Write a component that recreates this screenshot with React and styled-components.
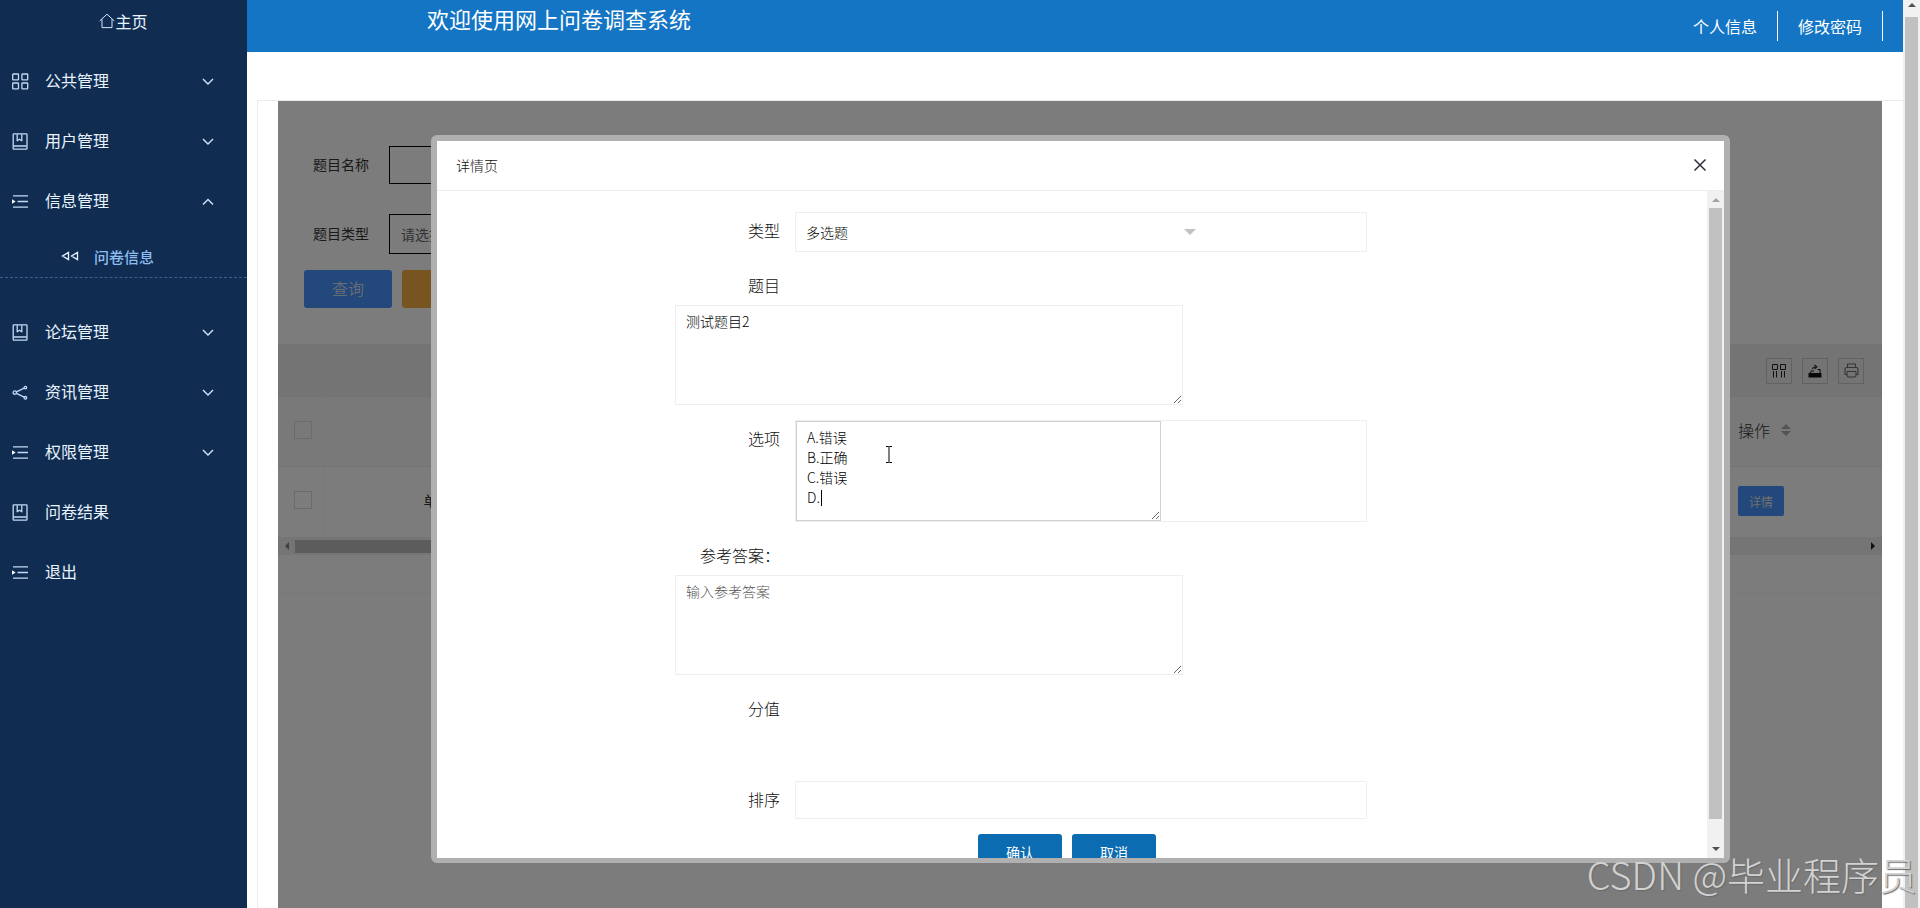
import styled, { createGlobalStyle } from "styled-components"
import { useState } from "react"

const GlobalStyle = createGlobalStyle`
    * {
        box-sizing: border-box;
    }
    body {
        margin: 0;
        font-family: "Noto Sans CJK SC", sans-serif;
        font-size: 14px;
        color: #333333;
        background-color: #ffffff;
    }
    input, select, textarea, button {
        font-family: inherit;
    }
`
const StylePage = styled.div`
    display: flex;
    height: 100vh;
    overflow: hidden;
    position: relative;
`
const StyleSidebar = styled.aside`
    flex: 0 0 247px;
    background-color: #102d51;
    color: #e9f3ff;
`
const StyleHome = styled.a`
    display: flex;
    justify-content: center;
    align-items: center;
    height: 42px;
    margin-bottom: 9px;
    font-size: 16px;
    color: inherit;
    text-decoration: none;
`
const StyleNavItem = styled.a`
    display: flex;
    align-items: center;
    height: 60px;
    padding: 0 31px 0 12px;
    gap: 16px;
    font-size: 16px;
    color: inherit;
    text-decoration: none;
`
const StyleNavText = styled.span`
    flex: 1;
    padding-bottom: 2px;
`
const StyleSubItem = styled.a`
    display: flex;
    align-items: center;
    height: 47px;
    margin-bottom: 24px;
    padding: 4px 0 0 61px;
    gap: 15px;
    font-size: 15px;
    font-weight: 500;
    color: #8fbdf2;
    text-decoration: none;
    border-bottom: 1px dashed #3d5f8a;
`
const StyleMain = styled.main`
    flex: 1;
    min-width: 0;
    display: flex;
    flex-direction: column;
`
const StyleTopBar = styled.header`
    display: flex;
    justify-content: space-between;
    align-items: center;
    height: 52px;
    padding: 0 20px 0 180px;
    background-color: #1475c4;
    color: #ffffff;
`
const StyleTitle = styled.h1`
    align-self: flex-start;
    margin: 0;
    font-size: 22px;
    line-height: 36px;
    font-weight: 400;
`
const StyleTopLink = styled.a`
    display: inline-block;
    padding: 0 20px;
    font-size: 16px;
    line-height: 30px;
    color: #ffffff;
    text-decoration: none;
    border-right: 1px solid #ffffff;
`
const StyleFrame = styled.div`
    flex: 1;
    display: flex;
    margin: 48px 0 0 10px;
    padding: 0 21px 0 20px;
    border-top: 1px solid #ececec;
    border-left: 1px solid #ececec;
`
const StylePanel = styled.section`
    flex: 1;
    min-width: 0;
    position: relative;
    background-color: #f8f8f8;
    border-radius: 2px 2px 0 0;
`
const StyleFilters = styled.form`
    display: flex;
    flex-direction: column;
    align-items: flex-start;
    padding: 45px 26px 36px;
`
const StyleFilterRow = styled.div`
    display: flex;
    align-items: center;
    gap: 20px;
    padding-left: 9px;
    margin-bottom: ${(props) => props.$space}px;
`
const StyleFilterLabel = styled.label`
    padding-bottom: 2px;
`
const StyleFilterInput = styled.input`
    width: 240px;
    height: 38px;
    padding: 0 11px;
    border: 1px solid #000000;
    background-color: transparent;
`
const StyleFilterSelect = styled.select`
    appearance: none;
    width: 240px;
    height: 40px;
    padding: 0 11px;
    border: 1px solid #000000;
    border-radius: 0;
    background-color: transparent;
    font-size: 14px;
    color: #666666;
`
const StyleFilterActions = styled.div`
    display: flex;
    gap: 10px;
`
const StyleFilterButton = styled.button`
    width: 88px;
    height: 38px;
    padding: 0 0 2px;
    border: none;
    border-radius: 3px;
    font-size: 16px;
    font-weight: 300;
    color: #e8e8e8;
    background-color: ${(props) => props.$color};
`
const StyleTools = styled.div`
    display: flex;
    justify-content: flex-end;
    align-items: center;
    gap: 10px;
    height: 53px;
    padding: 0 18px;
    background-color: #e9e9e9;
`
const StyleTool = styled.button`
    display: flex;
    justify-content: center;
    align-items: center;
    width: 26px;
    height: 26px;
    padding: 0;
    border: 1px solid #c4c4c4;
    background: none;
`
const StyleTable = styled.table`
    width: 100%;
    table-layout: fixed;
    border-collapse: collapse;
    th, td {
        padding: 0 8px 3px;
        font-weight: 400;
        text-align: left;
        border-bottom: 1px solid #ebebeb;
    }
    th {
        height: 69px;
        font-size: 16px;
        background-color: #f2f2f2;
    }
    td {
        height: 71px;
    }
    th:first-child, td:first-child {
        width: 46px;
        padding: 0 0 3px 16px;
        border-right: 1px solid #eeeeee;
    }
    th:last-child, td:last-child {
        width: 152px;
    }
`
const StyleCheck = styled.input`
    appearance: none;
    display: block;
    width: 18px;
    height: 18px;
    margin: 0;
    border: 1px solid #d6d6d6;
`
const StyleCell = styled.span`
    padding-left: 91px;
`
const StyleHeadCell = styled.span`
    display: flex;
    align-items: center;
    gap: 11px;
    font-weight: 300;
`
const StyleDetailButton = styled.button`
    display: block;
    width: 46px;
    height: 30px;
    margin-top: 2px;
    padding: 0;
    border: none;
    border-radius: 2px;
    font-size: 12px;
    color: #dddddd;
    background-color: #4690f8;
`
const StyleScrollX = styled.div`
    display: flex;
    align-items: center;
    gap: 4px;
    height: 17px;
    padding: 0 5px;
    background-color: #ebebeb;
`
const StyleThumbX = styled.div`
    width: 70%;
    height: 13px;
    margin-right: auto;
    background-color: #b8b8b8;
`
const StylePager = styled.div`
    height: 38px;
    border-bottom: 1px solid #f2f2f2;
`
const StyleShade = styled.div`
    position: absolute;
    inset: 0;
    display: flex;
    padding: 34px 152px 45px 153px;
    background-color: rgba(0, 0, 0, 0.5);
`
const StyleModal = styled.div`
    flex: 1;
    min-width: 0;
    display: flex;
    flex-direction: column;
    border: 6px solid #b0b0b0;
    border-bottom-width: 5px;
    border-radius: 6px;
    background-color: #ffffff;
`
const StyleModalHeader = styled.div`
    display: flex;
    justify-content: space-between;
    align-items: center;
    height: 50px;
    padding: 0 16px 2px 19px;
    border-bottom: 1px solid #eeeeee;
`
const StyleModalTitle = styled.h2`
    margin: 0;
    font-size: 14px;
    font-weight: 300;
    color: #111111;
`
const StyleClose = styled.button`
    display: flex;
    padding: 0;
    border: none;
    background: none;
    cursor: pointer;
`
const StyleModalBody = styled.div`
    flex: 1;
    min-height: 0;
    display: flex;
    overflow: hidden;
`
const StyleForm = styled.form`
    flex: 1;
    display: flex;
    flex-direction: column;
    gap: 15px;
    height: max-content;
    padding: 21px 340px 30px 238px;
`
const StyleField = styled.div`
    display: flex;
    align-items: flex-start;
    gap: 15px;
    min-height: ${(props) => props.$height || 38}px;
`
const StyleLabel = styled.label`
    flex: 0 0 105px;
    font-size: 16px;
    line-height: 36px;
    font-weight: 300;
    text-align: right;
    color: #111111;
`
const StyleBox = styled.div`
    flex: 1;
    display: flex;
    border: 1px solid #eeeeee;
`
const StyleSelectWrap = styled.div`
    display: flex;
    align-items: center;
    width: 408px;
`
const StyleSelect = styled.select`
    appearance: none;
    flex: 1;
    height: 38px;
    padding: 0 10px;
    border: none;
    background: none;
    font-size: 14px;
    font-weight: 300;
    color: #000000;
`
const StyleTextarea = styled.textarea`
    display: block;
    width: ${(props) => props.$width}px;
    height: 100px;
    margin: 0;
    padding: 5px 10px;
    border: 1px solid ${(props) => (props.$active ? "#cfcfcf" : "#eeeeee")};
    outline: none;
    background-color: #ffffff;
    font-size: 14px;
    line-height: 20px;
    font-weight: 300;
    color: #000000;
    resize: vertical;
    &::placeholder {
        color: #555555;
    }
`
const StyleTextareaWrap = styled.div`
    position: relative;
`
// the two wide text areas sit right under their label
const StyleTextareaRow = styled.div`
    margin-top: -15px;
`
const StyleCaret = styled.span`
    position: absolute;
    left: 25px;
    top: 69px;
    width: 1px;
    height: 16px;
    background-color: #000000;
`
const StylePointer = styled.svg`
    position: absolute;
    left: 89px;
    top: 25px;
`
const StyleInput = styled.input`
    flex: 1;
    height: 38px;
    padding: 0 10px;
    border: 1px solid #eeeeee;
    outline: none;
    font-size: 14px;
`
const StyleActions = styled.div`
    display: flex;
    gap: 10px;
    padding-left: 303px;
`
const StyleSubmit = styled.button`
    width: 84px;
    height: 36px;
    padding: 0;
    border: none;
    border-radius: 3px;
    font-size: 14px;
    color: #ffffff;
    background-color: #0b6cb1;
    cursor: pointer;
`
const StyleScrollY = styled.div`
    flex: 0 0 17px;
    display: flex;
    flex-direction: column;
    align-items: center;
    justify-content: space-between;
    padding: ${(props) => (props.$page ? "1px 0 0" : "5px 0 5px")};
    background-color: #f1f1f1;
`
const StyleThumbY = styled.div`
    flex: 1;
    width: 13px;
    margin: ${(props) => (props.$page ? "8px 0 0" : "4px 0 26px")};
    background-color: #c1c1c1;
`
const StyleWatermark = styled.div`
    position: absolute;
    right: 3px;
    bottom: 6px;
    font-size: 38px;
    line-height: 56px;
    font-weight: 300;
    color: #d2d2d2;
    text-shadow: 1px 1px 1px #6a6a6a;
    pointer-events: none;
`

const Stroke = ({ size = 17, children }) => (
    <svg width={size} height={size} viewBox="0 0 17 17" fill="none" stroke="#c3daf5" strokeWidth="1.3" strokeLinejoin="round">
        {children}
    </svg>
)

const icons = {
    grid: (
        <Stroke>
            <rect x="0.7" y="1" width="5.8" height="5.8" rx="0.6" />
            <rect x="9.9" y="1" width="5.8" height="5.8" rx="0.6" />
            <rect x="0.7" y="10" width="5.8" height="5.8" rx="0.6" />
            <rect x="9.9" y="10" width="5.8" height="5.8" rx="0.6" />
        </Stroke>
    ),
    book: (
        <Stroke>
            <rect x="1.2" y="0.8" width="13.8" height="15.4" rx="0.8" />
            <path d="M1.5 13H14.7M5.2 1.2V7.8L7.5 6.2L9.8 7.8V1.2" />
        </Stroke>
    ),
    list: (
        <Stroke>
            <path d="M1 2.8H16M5.5 8.5H16M1 14.2H16" />
            <path d="M0 6.2L3.6 8.5L0 10.8Z" fill="#ffffff" stroke="none" />
        </Stroke>
    ),
    share: (
        <Stroke>
            <circle cx="2.8" cy="8.6" r="1.7" />
            <circle cx="13.4" cy="3.6" r="1.3" />
            <circle cx="13.4" cy="13.8" r="1.3" />
            <path d="M4.4 7.8L12.2 4.2M4.4 9.4L12.2 13.2" />
        </Stroke>
    ),
}

const Chevron = ({ up }) => (
    <svg width="16" height="12" viewBox="0 0 16 12" fill="none" stroke="#d3e6fb" strokeWidth="1.4">
        <path d={up ? "M3 9.5L8 4.5L13 9.5" : "M3 4L8 9L13 4"} />
    </svg>
)

const Arrow = ({ dir, color = "#505050" }) => {
    const shapes = {
        up: "M0 6L4 2L8 6Z",
        down: "M0 2L4 6L8 2Z",
        left: "M6 0L2 4L6 8Z",
        right: "M2 0L6 4L2 8Z",
    }
    return (
        <svg width="8" height="8" viewBox="0 0 8 8">
            <path d={shapes[dir]} fill={color} />
        </svg>
    )
}

const menu = [
    { name: "公共管理", icon: "grid", group: true },
    { name: "用户管理", icon: "book", group: true },
    { name: "信息管理", icon: "list", group: true, child: "问卷信息" },
    { name: "论坛管理", icon: "book", group: true },
    { name: "资讯管理", icon: "share", group: true },
    { name: "权限管理", icon: "list", group: true },
    { name: "问卷结果", icon: "book" },
    { name: "退出", icon: "list" },
]

const Sidebar = () => (
    <StyleSidebar>
        <StyleHome href="#home">
            <svg width="16" height="16" viewBox="0 0 16 16" fill="none" stroke="#d3e6fb" strokeWidth="1">
                <path d="M0.6 8L8 1.2L15.4 8M3 6.2V14.6H13V6.2" />
            </svg>
            主页
        </StyleHome>
        <nav>
            {menu.map((item) => (
                <div key={item.name}>
                    <StyleNavItem href="#menu">
                        {icons[item.icon]}
                        <StyleNavText>{item.name}</StyleNavText>
                        {item.group && <Chevron up={Boolean(item.child)} />}
                    </StyleNavItem>
                    {item.child && (
                        <StyleSubItem href="#survey">
                            <svg width="18" height="10" viewBox="0 0 18 10" fill="none" stroke="#e9f3ff" strokeWidth="1.3">
                                <path d="M7.5 1.5V8.5L1.5 5ZM16.5 1.5V8.5L10.5 5Z" />
                            </svg>
                            {item.child}
                        </StyleSubItem>
                    )}
                </div>
            ))}
        </nav>
    </StyleSidebar>
)

const QuestionList = () => (
    <>
        <StyleFilters>
            <StyleFilterRow $space={30}>
                <StyleFilterLabel htmlFor="name">题目名称</StyleFilterLabel>
                <StyleFilterInput id="name" type="text" />
            </StyleFilterRow>
            <StyleFilterRow $space={16}>
                <StyleFilterLabel htmlFor="kind">题目类型</StyleFilterLabel>
                <StyleFilterSelect id="kind">
                    <option>请选择</option>
                </StyleFilterSelect>
            </StyleFilterRow>
            <StyleFilterActions>
                <StyleFilterButton type="button" $color="#4690f8">查询</StyleFilterButton>
                <StyleFilterButton type="button" $color="#f0a840" aria-label="重置" />
            </StyleFilterActions>
        </StyleFilters>
        <StyleTools>
            <StyleTool type="button" aria-label="筛选列">
                <svg width="14" height="14" viewBox="0 0 14 14" fill="none" stroke="#222222" strokeWidth="1">
                    <path d="M0.5 0.5H5.5V5.5H0.5ZM8.5 0.5H13.5V5.5H8.5ZM1.5 7V13.5M4.5 7V13.5M9.5 7V13.5M12.5 7V13.5" />
                </svg>
            </StyleTool>
            <StyleTool type="button" aria-label="导出">
                <svg width="14" height="14" viewBox="0 0 14 14">
                    <path d="M0.5 9H13.5V13.5H0.5Z" fill="#111111" />
                    <path d="M2 9L3.5 7H6M12 9V5.5H9.5M4.5 5C5 3 6.5 2.6 8.5 2.7M6.5 0.8L8.8 2.7L6.8 4.8" fill="none" stroke="#222222" strokeWidth="1.1" />
                </svg>
            </StyleTool>
            <StyleTool type="button" aria-label="打印">
                <svg width="15" height="15" viewBox="0 0 15 15" fill="none" stroke="#6a6a6a" strokeWidth="1.1" strokeLinejoin="round">
                    <path d="M3.5 4.5V1H11.5V4.5M3 11.5H1V6L2 4.5H13L14 6V11.5H12M3 8.5H12M3 8.5V12.5L4 14H11L12 12.5V8.5" />
                </svg>
            </StyleTool>
        </StyleTools>
        <StyleTable>
            <thead>
                <tr>
                    <th><StyleCheck type="checkbox" aria-label="全选" /></th>
                    <th />
                    <th>
                        <StyleHeadCell>
                            操作
                            <svg width="10" height="12" viewBox="0 0 10 12" fill="#a8a8a8">
                                <path d="M0 5L5 0L10 5ZM0 7L5 12L10 7Z" />
                            </svg>
                        </StyleHeadCell>
                    </th>
                </tr>
            </thead>
            <tbody>
                <tr>
                    <td><StyleCheck type="checkbox" aria-label="选择" /></td>
                    <td><StyleCell>单选题</StyleCell></td>
                    <td><StyleDetailButton type="button">详情</StyleDetailButton></td>
                </tr>
            </tbody>
        </StyleTable>
        <StyleScrollX>
            <Arrow dir="left" color="#808080" />
            <StyleThumbX />
            <Arrow dir="right" color="#202020" />
        </StyleScrollX>
        <StylePager />
    </>
)

const DetailModal = () => {
    const [options, setOptions] = useState("A.错误\nB.正确\nC.错误\nD.")
    const [title, setTitle] = useState("测试题目2")

    return (
        <StyleShade>
            <StyleModal role="dialog" aria-labelledby="modal-title">
                <StyleModalHeader>
                    <StyleModalTitle id="modal-title">详情页</StyleModalTitle>
                    <StyleClose type="button" aria-label="关闭">
                        <svg width="16" height="16" viewBox="0 0 16 16" stroke="#2e2d3c" strokeWidth="1.5">
                            <path d="M2.5 2.5L13.5 13.5M13.5 2.5L2.5 13.5" />
                        </svg>
                    </StyleClose>
                </StyleModalHeader>
                <StyleModalBody>
                    <StyleForm>
                        <StyleField>
                            <StyleLabel htmlFor="type">类型</StyleLabel>
                            <StyleBox>
                                <StyleSelectWrap>
                                    <StyleSelect id="type">
                                        <option>多选题</option>
                                    </StyleSelect>
                                    <svg width="20" height="6" viewBox="0 0 20 6">
                                        <path d="M0 0H12L6 6Z" fill="#c2c2c2" />
                                    </svg>
                                </StyleSelectWrap>
                            </StyleBox>
                        </StyleField>
                        <StyleField>
                            <StyleLabel htmlFor="title">题目</StyleLabel>
                        </StyleField>
                        <StyleTextareaRow>
                            <StyleTextarea id="title" $width={508} value={title} onChange={(e) => setTitle(e.target.value)} />
                        </StyleTextareaRow>
                        <StyleField>
                            <StyleLabel htmlFor="options">选项</StyleLabel>
                            <StyleBox>
                                <StyleTextareaWrap>
                                    <StyleTextarea id="options" $active $width={365} value={options} onChange={(e) => setOptions(e.target.value)} />
                                    <StyleCaret />
                                    <StylePointer width="8" height="17" viewBox="0 0 8 17" fill="none" stroke="#000000">
                                        <path d="M1 0.5H3.5L4 1L4.5 0.5H7M4 1V16M1 16.5H3.5L4 16L4.5 16.5H7" />
                                    </StylePointer>
                                </StyleTextareaWrap>
                            </StyleBox>
                        </StyleField>
                        <StyleField>
                            <StyleLabel htmlFor="answer">参考答案：</StyleLabel>
                        </StyleField>
                        <StyleTextareaRow>
                            <StyleTextarea id="answer" $width={508} placeholder="输入参考答案" />
                        </StyleTextareaRow>
                        <StyleField $height={76}>
                            <StyleLabel as="span">分值</StyleLabel>
                        </StyleField>
                        <StyleField>
                            <StyleLabel htmlFor="sort">排序</StyleLabel>
                            <StyleInput id="sort" type="text" />
                        </StyleField>
                        <StyleActions>
                            <StyleSubmit type="button">确认</StyleSubmit>
                            <StyleSubmit type="button">取消</StyleSubmit>
                        </StyleActions>
                    </StyleForm>
                    <StyleScrollY>
                        <Arrow dir="up" color="#a3a3a3" />
                        <StyleThumbY />
                        <Arrow dir="down" />
                    </StyleScrollY>
                </StyleModalBody>
            </StyleModal>
        </StyleShade>
    )
}

export default function App() {
    return (
        <>
            <GlobalStyle />
            <StylePage>
                <Sidebar />
                <StyleMain>
                    <StyleTopBar>
                        <StyleTitle>欢迎使用网上问卷调查系统</StyleTitle>
                        <div>
                            <StyleTopLink href="#profile">个人信息</StyleTopLink>
                            <StyleTopLink href="#password">修改密码</StyleTopLink>
                        </div>
                    </StyleTopBar>
                    <StyleFrame>
                        <StylePanel>
                            <QuestionList />
                            <DetailModal />
                        </StylePanel>
                    </StyleFrame>
                </StyleMain>
                <StyleScrollY $page>
                    <Arrow dir="up" />
                    <StyleThumbY $page />
                </StyleScrollY>
                <StyleWatermark>CSDN @毕业程序员</StyleWatermark>
            </StylePage>
        </>
    )
}
